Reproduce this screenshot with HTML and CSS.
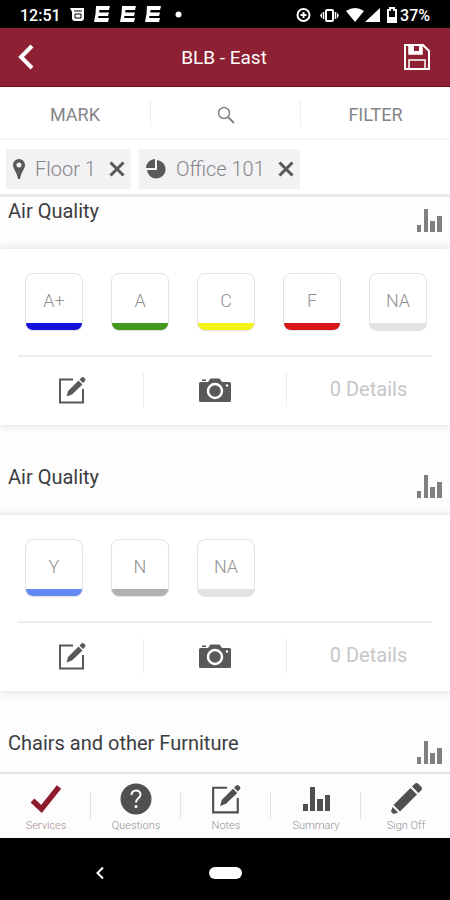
FILE: index.html
```html
<!DOCTYPE html>
<html lang="en">
<head>
<meta charset="utf-8">
<meta name="viewport" content="width=device-width, initial-scale=1">
<title>BLB - East</title>
<link rel="stylesheet" href="styles.css">
</head>
<body>
<svg class="symbols" aria-hidden="true">
  <symbol id="i-bars" viewBox="0 0 25 23"><path d="M0 16h4v7H0zM7 0h4v23H7zM13 12h5v11h-5zM20 7h5v16h-5z" fill="currentColor"/></symbol>
  <symbol id="i-edit" viewBox="0 0 28 28"><path d="M15 3.500H2v23h23V13" fill="none" stroke="currentColor" stroke-width="2"/><path d="M8.500 20.500l1.500-5.500L20.500 4.500l4 4-10.500 10zM21.500 3.500l2-2q1.200-1 2.400 0l1.100 1.100q1 1.200 0 2.400l-2 2z" fill="currentColor"/></symbol>
  <symbol id="i-camera" viewBox="0 0 32 24"><path d="M1.500 4H9l2.500-3.500h9L23 4h7.500Q32 4 32 5.500v17q0 1.500-1.500 1.500h-29Q0 24 0 22.500v-17Q0 4 1.500 4zM3 1.500h4V3H3z" fill="currentColor"/><circle cx="16" cy="13" r="7" fill="none" stroke="#fff" stroke-width="2.500"/><circle cx="28" cy="7.500" r="1.200" fill="#fff"/></symbol>
  <symbol id="i-x" viewBox="0 0 16 16"><path d="M1.500 1.500l13 13M14.500 1.500l-13 13" stroke="currentColor" stroke-width="3" fill="none"/></symbol>
</svg>

<div class="status">
  <span>12:51</span>
  <svg class="status-left" viewBox="0 0 114 18" width="114" height="18" aria-hidden="true">
    <path d="M0 2h14v10q0 3-3 3H5q-3 0-3-3V6z" fill="#fff"/><path d="M4 5h8M5 8h6v4H5z" stroke="#000" fill="none"/>
    <g id="e" fill="#fff"><path d="M26 0h14l-1 4H29.500l-.3 2.500H39l-1 3.500h-9.500l-.5 2H39l-1 4H24l1.500-8z"/></g>
    <use href="#e" x="26"/><use href="#e" x="51"/>
    <circle cx="108.500" cy="8.500" r="3" fill="#fff"/>
  </svg>
  <svg class="status-right" viewBox="0 0 102 18" width="102" height="18" aria-hidden="true">
    <g fill="none" stroke="#fff"><circle cx="7.500" cy="9" r="6" stroke-width="2"/><path d="M4.500 9h6M7.500 6v6" stroke-width="2"/><rect x="30" y="4" width="7" height="11" rx="1" stroke-width="2"/><path d="M27.500 6v7M39.500 6v7" stroke-width="1.500"/></g>
    <path d="M26 6.500v6l-2-3zM41 6.500v6l2-3zM50 5q9-6 18 0l-9 11zM84 2v14H69z" fill="#fff"/>
    <path d="M92 4h2V2h4v2h2v12h-8z" fill="none" stroke="#fff" stroke-width="2"/><path d="M92 11h8v5h-8z" fill="#fff"/>
  </svg>
  <span>37%</span>
</div>

<header class="appbar">
  <button class="icon-btn" aria-label="Back"><svg width="16" height="26" viewBox="0 0 16 26"><path d="M14 2L3 13l11 11" fill="none" stroke="currentColor" stroke-width="4"/></svg></button>
  <h1>BLB - East</h1>
  <button class="icon-btn" aria-label="Save"><svg width="26" height="26" viewBox="0 0 26 26"><path d="M1 1h18l6 6v18H1z" fill="none" stroke="currentColor" stroke-width="2"/><path d="M5 1v9h13V1M5 25v-9h16v9" fill="none" stroke="currentColor" stroke-width="1.500"/><path d="M5 1h5v9H5zM15 1h3v9h-8V7h5z" fill="currentColor"/></svg></button>
</header>

<div class="tabs">
  <button>MARK</button>
  <button aria-label="Search"><svg width="18" height="18" viewBox="0 0 18 18"><circle cx="7" cy="7" r="5.500" fill="none" stroke="currentColor" stroke-width="1.500"/><path d="M11 11l6 6" stroke="currentColor" stroke-width="2"/></svg></button>
  <button>FILTER</button>
</div>

<div class="chips">
  <div class="chip">
    <svg width="12" height="20" viewBox="0 0 12 20" aria-hidden="true"><path fill-rule="evenodd" d="M6 0a6 6 0 0 1 6 6c0 4-4 7-5 14H5C4 13 0 10 0 6a6 6 0 0 1 6-6zm0 3.500a2.500 2.500 0 1 0 0 5 2.500 2.500 0 0 0 0-5z" fill="currentColor"/></svg>
    <span>Floor 1</span>
    <button aria-label="Remove Floor 1"><svg width="16" height="16"><use href="#i-x"/></svg></button>
  </div>
  <div class="chip">
    <svg width="20" height="20" viewBox="0 0 20 20" aria-hidden="true"><path d="M11 1a9.300 9.300 0 1 1-10 10h10zM9 0v9H0a9 9 0 0 1 9-9z" fill="currentColor"/></svg>
    <span>Office 101</span>
    <button aria-label="Remove Office 101"><svg width="16" height="16"><use href="#i-x"/></svg></button>
  </div>
</div>

<main>
  <div class="list">
    <section>
      <div class="head"><h2>Air Quality</h2><button class="stats" aria-label="Statistics"><svg width="25" height="23"><use href="#i-bars"/></svg></button></div>
      <div class="card">
        <div class="grades">
          <button class="grade blue">A+</button><button class="grade green">A</button><button class="grade yellow">C</button><button class="grade red">F</button><button class="grade">NA</button>
        </div>
        <div class="actions">
          <button aria-label="Add note"><svg width="28" height="28"><use href="#i-edit"/></svg></button>
          <button aria-label="Take photo"><svg width="32" height="24"><use href="#i-camera"/></svg></button>
          <button>0 Details</button>
        </div>
      </div>
    </section>
    <section>
      <div class="head"><h2>Air Quality</h2><button class="stats" aria-label="Statistics"><svg width="25" height="23"><use href="#i-bars"/></svg></button></div>
      <div class="card">
        <div class="grades">
          <button class="grade sky">Y</button><button class="grade gray">N</button><button class="grade">NA</button>
        </div>
        <div class="actions">
          <button aria-label="Add note"><svg width="28" height="28"><use href="#i-edit"/></svg></button>
          <button aria-label="Take photo"><svg width="32" height="24"><use href="#i-camera"/></svg></button>
          <button>0 Details</button>
        </div>
      </div>
    </section>
    <section>
      <div class="head"><h2>Chairs and other Furniture</h2><button class="stats" aria-label="Statistics"><svg width="25" height="23"><use href="#i-bars"/></svg></button></div>
    </section>
  </div>
</main>

<nav class="nav">
  <a href="#services" class="active"><svg width="32" height="32" viewBox="0 0 32 32"><path d="M2.500 17.500l9 8.500L29 4" fill="none" stroke="currentColor" stroke-width="5.500"/></svg><span>Services</span></a>
  <a href="#questions"><svg width="32" height="32" viewBox="0 0 32 32"><circle cx="16" cy="16" r="15.500" fill="currentColor"/><path d="M11.500 12c0-6 9-6 9-.5 0 4-4.500 3.500-4.500 8" fill="none" stroke="#fff" stroke-width="2"/><circle cx="16" cy="23.500" r="1.500" fill="#fff"/></svg><span>Questions</span></a>
  <a href="#notes"><svg width="30" height="30"><use href="#i-edit"/></svg><span>Notes</span></a>
  <a href="#summary"><svg width="27" height="32" viewBox="0 0 27 32"><path d="M0 21h5v7H0zM7 4h5v24H7zM14 16h6v12h-6zM22 12h5v16h-5z" fill="currentColor"/></svg><span>Summary</span></a>
  <a href="#signoff"><svg width="34" height="34" viewBox="0 0 34 34"><path d="M4.500 23L21.500 6l6.500 6.500L11 29.500zM23 4.500L26 1.500q1.500-1 3 0l3.500 3.500q1 1.500 0 3l-3 3zM3.500 25l5.500 5.500-4.500 1.500-2.500-2.500z" fill="currentColor"/></svg><span>Sign Off</span></a>
</nav>

<div class="system">
  <button aria-label="System back"><svg width="10" height="14" viewBox="0 0 10 14"><path d="M8 1.500L2.500 7 8 12.500" fill="none" stroke="currentColor" stroke-width="2"/></svg></button>
  <button aria-label="Home"><span class="pill"></span></button>
</div>
</body>
</html>
```
FILE: styles.css
```css
* { box-sizing: border-box; }
body {
  margin: 0;
  height: 100vh;
  display: flex;
  flex-direction: column;
  font-family: Roboto, "Liberation Sans", sans-serif;
  background: #fefdfe;
  color: #58595b;
}
body > * { flex-shrink: 0; }
.symbols { position: absolute; width: 0; height: 0; }
button {
  margin: 0;
  padding: 0;
  border: 0;
  background: none;
  font: inherit;
  color: inherit;
  display: flex;
  align-items: center;
  justify-content: center;
}
svg { display: block; }

.status {
  height: 28px;
  padding: 2px 20px 0;
  display: flex;
  align-items: center;
  background: #000;
  color: #fff;
  font-size: 16px;
  font-weight: 500;
}
.status-left { margin-left: 9px; }
.status-right { margin-left: auto; }
.status span:last-child { margin-left: 2px; }

.appbar {
  height: 59px;
  padding: 0 20px 0 18px;
  display: flex;
  align-items: center;
  justify-content: space-between;
  background: #8e2033;
  border-bottom: 1px solid #760a18;
  color: #fff;
}
.appbar .icon-btn { width: 26px; }
.appbar .icon-btn:first-child { justify-content: flex-start; }
h1 { margin: 0; font-size: 19px; font-weight: 400; }

.tabs {
  height: 53px;
  display: grid;
  grid-template-columns: repeat(3, 1fr);
  align-items: center;
  border-bottom: 2px solid #f5f4f6;
  background: #fff;
  color: #858587;
  font-size: 18px;
  font-weight: 400;
}
.tabs button { height: 26px; padding-top: 4px; }
.tabs button + button { border-left: 1px solid #ececee; }

.chips {
  height: 57px;
  padding: 9px 6px 0;
  display: flex;
  align-items: flex-start;
  gap: 8px;
  border-bottom: 3px solid #e8e7e9;
  background: #fff;
}
.chip {
  height: 40px;
  padding: 0 6px 0 7px;
  display: flex;
  align-items: center;
  background: #f2f1f4;
  font-size: 20px;
  font-weight: 300;
}
.chip span { margin: 0 13px 0 10px; color: #858587; }

main { flex: 1 1 0; min-height: 0; overflow: hidden; }
.list { margin-top: -38px; }
.head {
  height: 90px;
  padding: 13px 8px 0;
  display: flex;
  align-items: center;
  justify-content: space-between;
}
.stats { padding-top: 20px; color: #808083; }
h2 { margin: 0; font-size: 20px; font-weight: 400; color: #3c3c3f; }
.card {
  height: 176px;
  background: #fff;
  box-shadow: 0 0 8px 1px #dedde0;
}
.grades {
  height: 106px;
  padding: 24px 0 0 25px;
  display: flex;
  gap: 28px;
}
.grade {
  width: 58px;
  height: 58px;
  border: 1px solid #e2e2e4;
  border-radius: 8px;
  background: linear-gradient(to top, #e2e2e4 8px, #fff 8px);
  background-origin: border-box;
  color: #929294;
  font-size: 18px;
  font-weight: 300;
  padding-bottom: 3px;
}
.blue { background-image: linear-gradient(to top, #1512dc 8px, #fff 8px); }
.green { background-image: linear-gradient(to top, #43991c 8px, #fff 8px); }
.yellow { background-image: linear-gradient(to top, #f3f516 8px, #fff 8px); }
.red { background-image: linear-gradient(to top, #d9171b 8px, #fff 8px); }
.sky { background-image: linear-gradient(to top, #6389f5 8px, #fff 8px); }
.gray { background-image: linear-gradient(to top, #b0b1b1 8px, #fff 8px); }
.actions {
  height: 70px;
  display: grid;
  grid-template-columns: 143fr 143fr 164fr;
  align-items: center;
  background: linear-gradient(#ededee, #ededee) 18px 0 / calc(100% - 36px) 2px no-repeat;
}
.actions button { height: 34px; }
.actions button + button { border-left: 1px solid #ededee; }
.actions button:last-child { color: #c6c6c8; font-size: 20px; font-weight: 400; padding-bottom: 2px; }

.nav {
  height: 66px;
  display: grid;
  grid-template-columns: repeat(5, 1fr);
  border-top: 2px solid #e2e1e4;
  background: #fefdfe;
}
.nav a {
  padding: 8px 0 0 2px;
  display: grid;
  grid-template-rows: 34px 18px;
  align-items: center;
  justify-items: center;
  color: #505052;
  text-decoration: none;
  background: linear-gradient(#e4e3e6, #e4e3e6) 0 18px / 1px 27px no-repeat;
}
.nav a:first-child { background: none; }
.nav span { font-size: 11px; font-weight: 300; color: #929094; }
.nav .active { color: #8e1a2e; }
.nav .active span { color: #a58a90; }

.system {
  height: 62px;
  padding-top: 8px;
  display: grid;
  grid-template-columns: 1fr 50px 1fr;
  align-items: center;
  background: #000;
  color: #fff;
}
.pill { width: 33px; height: 12px; border-radius: 6px; background: #fff; }
```
